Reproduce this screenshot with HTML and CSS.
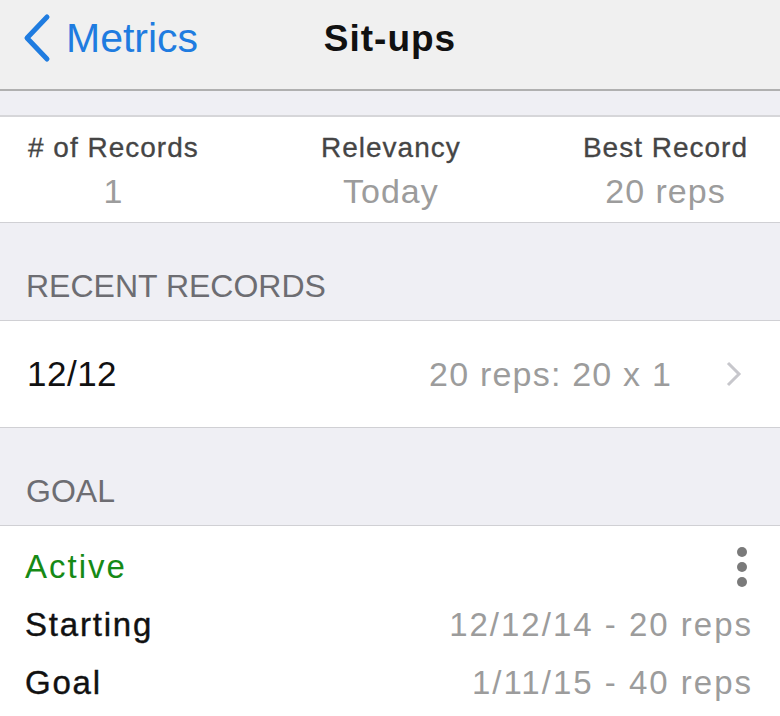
FILE: index.html
```html
<!DOCTYPE html>
<html>
<head>
  <title>Sit-ups</title>
  <link rel="stylesheet" href="styles.css">
</head>
<body>
  <header class="navbar">
    <a class="back" href="#">
      <svg class="back-icon" width="32" height="50" viewBox="0 0 32 50">
        <path d="M27 4 L7 25 L27 46" fill="none" stroke="#1f7ce0" stroke-width="5" stroke-linecap="round" stroke-linejoin="round"/>
      </svg>
      <span>Metrics</span>
    </a>
    <h1 class="title">Sit-ups</h1>
    <div></div>
  </header>

  <div class="spacer"></div>

  <section class="stats">
    <div class="stat">
      <div class="stat-label"># of Records</div>
      <div class="stat-value">1</div>
    </div>
    <div class="stat">
      <div class="stat-label">Relevancy</div>
      <div class="stat-value">Today</div>
    </div>
    <div class="stat">
      <div class="stat-label">Best Record</div>
      <div class="stat-value">20 reps</div>
    </div>
  </section>

  <div class="section-header">RECENT RECORDS</div>

  <div class="record-row">
    <span class="record-date">12/12</span>
    <span class="record-detail">20 reps: 20 x 1</span>
    <svg class="chevron" width="20" height="28" viewBox="0 0 20 28">
      <path d="M4 3 L15 14 L4 25" fill="none" stroke="#c7c7cc" stroke-width="3"/>
    </svg>
  </div>

  <div class="section-header">GOAL</div>

  <section class="goal">
    <div class="goal-row">
      <span class="goal-status">Active</span>
      <svg class="more" width="12" height="40" viewBox="0 0 12 40">
        <circle cx="6" cy="5" r="5" fill="#7a7a7a"/>
        <circle cx="6" cy="20" r="5" fill="#7a7a7a"/>
        <circle cx="6" cy="35" r="5" fill="#7a7a7a"/>
      </svg>
    </div>
    <div class="goal-row">
      <span class="goal-label">Starting</span>
      <span class="goal-value">12/12/14 - 20 reps</span>
    </div>
    <div class="goal-row">
      <span class="goal-label">Goal</span>
      <span class="goal-value">1/11/15 - 40 reps</span>
    </div>
  </section>
</body>
</html>
```

FILE: styles.css
```css
body {
  margin: 0;
  font-family: "Liberation Sans", Arial, sans-serif;
  background-color: #fff;
  color: #111;
}

.navbar {
  display: grid;
  grid-template-columns: 1fr auto 1fr;
  align-items: center;
  height: 91px;
  box-sizing: border-box;
  padding: 13px 0 28px;
  background-color: #f0f0f0;
  border-bottom: 2px solid #b0b0b0;
}
.back {
  display: flex;
  align-items: center;
  gap: 14px;
  padding-left: 20px;
  color: #1f7ce0;
  text-decoration: none;
  font-size: 41px;
  line-height: 1;
}
.title {
  margin: 0;
  font-size: 37px;
  font-weight: bold;
  letter-spacing: 1px;
  line-height: 1;
}

.spacer {
  height: 24px;
  background-color: #efeff4;
  border-bottom: 2px solid #d6d6d9;
}

.stats {
  display: flex;
  justify-content: space-between;
  padding: 15px 32px 10px 28px;
  border-bottom: 1px solid #d0d0d4;
}
.stat {
  text-align: center;
}
.stat-label {
  font-size: 28px;
  line-height: 32px;
  letter-spacing: 1px;
  color: #454545;
  -webkit-text-stroke: 0.3px #454545;
}
.stat-value {
  margin-top: 6px;
  font-size: 34px;
  line-height: 42px;
  letter-spacing: 1px;
  color: #9c9c9c;
}

.section-header {
  padding: 44px 26px 15px;
  font-size: 32px;
  line-height: 38px;
  color: #6d6d72;
  background-color: #efeff4;
  border-bottom: 1px solid #d0d0d4;
}

.record-row {
  display: flex;
  align-items: center;
  height: 106px;
  padding: 0 36px 0 27px;
  border-bottom: 1px solid #d0d0d4;
}
.record-date {
  flex: 1;
  font-size: 35px;
  letter-spacing: 0.5px;
}
.record-detail {
  font-size: 34px;
  letter-spacing: 1.2px;
  color: #9c9c9c;
  margin-right: 52px;
}

.goal {
  padding: 12px 27px 0 25px;
}
.goal-row {
  display: flex;
  justify-content: space-between;
  align-items: center;
  height: 58px;
  font-size: 33px;
}
.goal-status {
  color: #168a16;
  letter-spacing: 2px;
}
.goal-label {
  letter-spacing: 1.8px;
  -webkit-text-stroke: 0.4px #111;
}
.goal-value {
  color: #9c9c9c;
  letter-spacing: 2px;
}
.more {
  margin-right: 5px;
}
```
